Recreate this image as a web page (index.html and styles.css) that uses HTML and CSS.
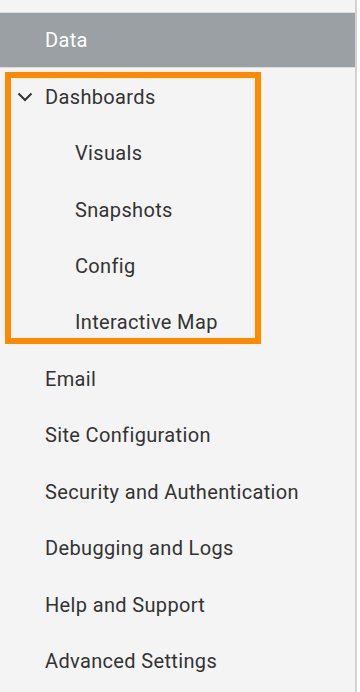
FILE: index.html
```html
<!DOCTYPE html>
<html lang="en">
<head>
  <meta charset="UTF-8">
  <title>Settings menu</title>
  <link rel="stylesheet" href="styles.css">
</head>
<body>
  <nav class="sidebar">
    <div class="item active">Data</div>
    <div class="group">
      <div class="item parent">
        <svg class="chevron" width="16" height="10" viewBox="0 0 16 10">
          <path d="M1.5 1.5 L8 8 L14.5 1.5" fill="none" stroke="#333" stroke-width="2"/>
        </svg>
        Dashboards
      </div>
      <div class="item sub">Visuals</div>
      <div class="item sub">Snapshots</div>
      <div class="item sub">Config</div>
      <div class="item sub">Interactive Map</div>
    </div>
    <div class="item">Email</div>
    <div class="item">Site Configuration</div>
    <div class="item">Security and Authentication</div>
    <div class="item">Debugging and Logs</div>
    <div class="item">Help and Support</div>
    <div class="item">Advanced Settings</div>
  </nav>
</body>
</html>
```

FILE: styles.css
```css
body {
  margin: 0;
  background: #fff;
  font-family: Roboto, "Liberation Sans", sans-serif;
}
.sidebar {
  width: 357px;
  height: 692px;
  box-sizing: border-box;
  padding-top: 12px;
  background: #f4f4f4;
  border-right: 2px solid #d2d2d2;
  overflow: hidden;
}
.item {
  display: flex;
  align-items: center;
  height: 56.45px;
  box-sizing: border-box;
  padding-left: 45px;
  font-size: 20px;
  letter-spacing: 0.35px;
  color: #333;
}
.item.active {
  background: #9aa0a3;
  color: #fff;
  border-top: 1px solid #dcdcdc;
  border-bottom: 1px solid #dcdcdc;
}
.item.sub {
  padding-left: 75px;
}
.item.parent {
  padding-left: 17px;
}
.chevron {
  margin-right: 12px;
}
.group {
  position: relative;
}
.group::after {
  content: "";
  position: absolute;
  left: 5px;
  top: 4px;
  width: 256px;
  height: 272px;
  box-sizing: border-box;
  border: 6px solid #ff8a00;
}
```
